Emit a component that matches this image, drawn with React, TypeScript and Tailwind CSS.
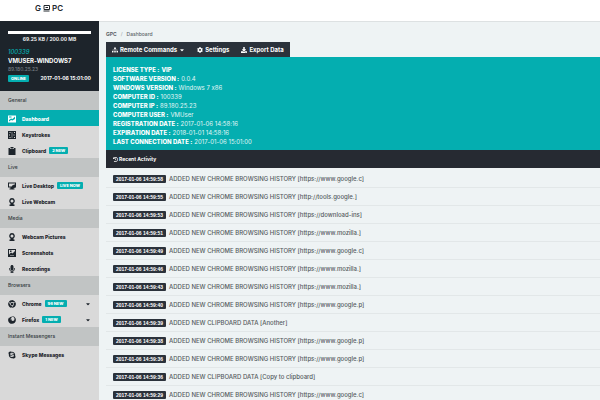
import type { ReactNode } from "react";
import {
  FaCaretDown,
  FaChrome,
  FaCog,
  FaDownload,
  FaFirefox,
  FaHistory,
  FaMicrophone,
  FaSitemap,
  FaSkype,
} from "react-icons/fa";

interface NavItem {
  label: string;
  icon: ReactNode;
  badge?: string;
  active?: boolean;
  expandable?: boolean;
}

interface NavSection {
  title: string;
  items: NavItem[];
}

function ChartIcon() {
  return (
    <svg viewBox="0 0 16 16" className="size-2" fill="currentColor">
      <path fillRule="evenodd" d="M0 1h16v14H0zM2 10l4-3 3 1 5-5v5L9 11 6 10l-4 3zM2 3h5v2H2z" />
    </svg>
  );
}

function KeysIcon() {
  return (
    <svg viewBox="0 0 16 16" className="size-2" fill="currentColor">
      <path
        fillRule="evenodd"
        d="M0 0h16v16H0zM3 2v2h2V2zM7 3v2h2V3zM12 2v2h2V2zM2 7v2h2V7zM7 7v2h2V7zM11 7v2h2V7zM3 12v2h2v-2zM7 11v2h2v-2zM12 12v2h2v-2z"
      />
    </svg>
  );
}

function ClipboardIcon() {
  return (
    <svg viewBox="0 0 16 16" className="size-2" fill="currentColor">
      <path d="M1 2h3v2h8V2h3v14H1zM5 0h6v3H5z" />
    </svg>
  );
}

function DesktopIcon() {
  return (
    <svg viewBox="0 0 16 16" className="size-2" fill="currentColor">
      <path fillRule="evenodd" d="M0 1h16v10h-5v2h2v2H3v-2h2v-2H0zM2 3v6h5l5-4h2V3z" />
      <path d="M9 6l6 5-4 1-2 3z" />
    </svg>
  );
}

function WebcamIcon() {
  return (
    <svg viewBox="0 0 16 16" className="size-2" fill="currentColor">
      <path
        fillRule="evenodd"
        d="M8 0a6 6 0 0 1 3 11v2h2v3H3v-3h2v-2A6 6 0 0 1 8 0zM8 3a3 3 0 1 0 0 6a3 3 0 0 0 0-6z"
      />
    </svg>
  );
}

function ScreenshotIcon() {
  return (
    <svg viewBox="0 0 16 16" className="size-2" fill="currentColor">
      <path fillRule="evenodd" d="M0 0h16v16H0zM2 2v9l4-4 3 2 5-5V2zM4 13h8v-1H4z" />
      <path d="M4 3h3v3H4z" />
    </svg>
  );
}

const sections: NavSection[] = [
  {
    title: "General",
    items: [
      { label: "Dashboard", icon: <ChartIcon />, active: true },
      { label: "Keystrokes", icon: <KeysIcon /> },
      { label: "Clipboard", icon: <ClipboardIcon />, badge: "2 NEW" },
    ],
  },
  {
    title: "Live",
    items: [
      { label: "Live Desktop", icon: <DesktopIcon />, badge: "LIVE NOW" },
      { label: "Live Webcam", icon: <WebcamIcon /> },
    ],
  },
  {
    title: "Media",
    items: [
      { label: "Webcam Pictures", icon: <WebcamIcon /> },
      { label: "Screenshots", icon: <ScreenshotIcon /> },
      { label: "Recordings", icon: <FaMicrophone /> },
    ],
  },
  {
    title: "Browsers",
    items: [
      { label: "Chrome", icon: <FaChrome />, badge: "96 NEW", expandable: true },
      { label: "Firefox", icon: <FaFirefox />, badge: "1 NEW", expandable: true },
    ],
  },
  {
    title: "Instant Messengers",
    items: [{ label: "Skype Messages", icon: <FaSkype /> }],
  },
];

const details = [
  { label: "LICENSE TYPE", value: "VIP", strong: true },
  { label: "SOFTWARE VERSION", value: "0.0.4" },
  { label: "WINDOWS VERSION", value: "Windows 7 x86" },
  { label: "COMPUTER ID", value: "100339" },
  { label: "COMPUTER IP", value: "89.180.25.23" },
  { label: "COMPUTER USER", value: "VMUser" },
  { label: "REGISTRATION DATE", value: "2017-01-06 14:58:16" },
  { label: "EXPIRATION DATE", value: "2018-01-01 14:58:16" },
  { label: "LAST CONNECTION DATE", value: "2017-01-06 15:01:00" },
];

const activity = [
  { time: "2017-01-06 14:59:58", text: "ADDED NEW CHROME BROWSING HISTORY [https://www.google.c]" },
  { time: "2017-01-06 14:59:55", text: "ADDED NEW CHROME BROWSING HISTORY [http://tools.google.]" },
  { time: "2017-01-06 14:59:53", text: "ADDED NEW CHROME BROWSING HISTORY [https://download-ins]" },
  { time: "2017-01-06 14:59:51", text: "ADDED NEW CHROME BROWSING HISTORY [https://www.mozilla.]" },
  { time: "2017-01-06 14:59:49", text: "ADDED NEW CHROME BROWSING HISTORY [https://www.google.c]" },
  { time: "2017-01-06 14:59:46", text: "ADDED NEW CHROME BROWSING HISTORY [https://www.mozilla.]" },
  { time: "2017-01-06 14:59:43", text: "ADDED NEW CHROME BROWSING HISTORY [https://www.mozilla.]" },
  { time: "2017-01-06 14:59:40", text: "ADDED NEW CHROME BROWSING HISTORY [https://www.google.p]" },
  { time: "2017-01-06 14:59:39", text: "ADDED NEW CLIPBOARD DATA [Another]" },
  { time: "2017-01-06 14:59:38", text: "ADDED NEW CHROME BROWSING HISTORY [https://www.google.p]" },
  { time: "2017-01-06 14:59:36", text: "ADDED NEW CHROME BROWSING HISTORY [https://www.google.p]" },
  { time: "2017-01-06 14:59:36", text: "ADDED NEW CLIPBOARD DATA [Copy to clipboard]" },
  { time: "2017-01-06 14:59:29", text: "ADDED NEW CHROME BROWSING HISTORY [https://www.google.c]" },
];

function Sidebar() {
  return (
    <aside className="w-[99px] shrink-0 bg-[#d9d9d9]">
      <div className="h-[70px] bg-[#1d242b] px-2 pt-2.5 text-white">
        <div className="h-[3px] bg-white" />
        <p className="pt-px text-center text-[5px] leading-[9px] font-semibold">69.25 KB / 200.00 MB</p>
        <a href="#computer" className="mt-1 block text-[6px] leading-2 font-medium text-[#04aeb0] italic">
          100339
        </a>
        <p className="text-[6px] leading-[9px] font-bold">VMUSER-WINDOWS7</p>
        <p className="text-[5px] leading-2 text-[#7d858c]">89.180.25.23</p>
        <div className="flex items-center justify-between pt-px whitespace-nowrap">
          <span className="rounded-[1px] bg-[#04aeb0] px-[3px] text-[4px] leading-[7px] font-extrabold">ONLINE</span>
          <span className="text-[5px] leading-2 font-bold">2017-01-06 15:01:00</span>
        </div>
      </div>

      <nav>
        {sections.map((section) => (
          <div key={section.title}>
            <h2 className="bg-[#c1c4c4] px-2 text-[5px] leading-[19px] font-medium text-[#333a40]">
              {section.title}
            </h2>
            {section.items.map((item) => (
              <a
                key={item.label}
                href="#nav"
                className={`flex h-4 items-center px-2 pt-px text-[5px] leading-2 font-extrabold ${
                  item.active ? "bg-[#04aeb0] text-white" : "text-[#1d242b]"
                }`}
              >
                <span className="mr-1.5 flex w-2 justify-center text-[8px]">{item.icon}</span>
                {item.label}
                {item.badge && (
                  <span className="ml-[3px] rounded-[1px] bg-[#04aeb0] px-[3px] text-[4px] leading-[7px] text-white">
                    {item.badge}
                  </span>
                )}
                {item.expandable && <FaCaretDown className="ml-auto text-[6px]" />}
              </a>
            ))}
          </div>
        ))}
      </nav>
    </aside>
  );
}

export default function App() {
  return (
    <div className="flex h-screen flex-col overflow-hidden bg-[#eef3f4] font-[Inter,'Liberation_Sans',sans-serif] [font-feature-settings:'calt'_0]">
      <header className="flex h-[21px] shrink-0 items-start bg-white pt-1 pl-[35px]">
        <h1 className="flex items-center gap-0.5 text-[8px] leading-2 font-semibold text-[#22282e]">
          G
          <svg viewBox="0 0 14 14" className="size-[7px]" fill="none" stroke="currentColor" strokeWidth="2">
            <path d="M2 1h11v8H2zM1 12h12M5 5h5" />
          </svg>
          PC
        </h1>
      </header>

      <div className="flex min-h-0 flex-1">
        <Sidebar />

        <main className="min-w-0 flex-1 border-t border-[#dde1e2] pl-[7px]">
          <div className="flex h-5 items-end gap-1 pb-1 text-[5px] leading-2 font-medium text-[#5c6368]">
            <a href="#gpc" className="font-bold">
              GPC
            </a>
            <span className="text-[#a5abae]">/</span>
            <span>Dashboard</span>
          </div>

          <div className="flex">
            <div className="flex h-[15px] items-center gap-3 bg-[#2b323b] px-1.5 text-[6px] font-bold text-white">
              <button type="button" className="flex items-center gap-0.5">
                <FaSitemap />
                Remote Commands
                <FaCaretDown />
              </button>
              <button type="button" className="flex items-center gap-0.5">
                <FaCog />
                Settings
              </button>
              <button type="button" className="flex items-center gap-0.5">
                <FaDownload />
                Export Data
              </button>
            </div>
          </div>

          <dl className="bg-[#04aeb0] px-[7px] pt-2 pb-1 text-[6px] leading-[9px] text-white">
            {details.map((detail) => (
              <div key={detail.label} className="flex gap-0.5">
                <dt className="font-extrabold">{detail.label} :</dt>
                <dd className={detail.strong ? "font-extrabold" : "text-[#e2f6f6]"}>{detail.value}</dd>
              </div>
            ))}
          </dl>

          <h2 className="flex h-[18px] items-center gap-px bg-[#262a32] px-[7px] text-[5px] leading-2 font-bold text-white">
            <FaHistory />
            Recent Activity
          </h2>

          <ul className="pt-0.5">
            {activity.map((entry, i) => (
              <li key={i} className="flex h-[18px] items-center gap-[3px] border-b border-[#e2e7e8] px-[7px]">
                <time className="rounded-[1px] bg-[#2b323b] px-[3px] font-['Liberation_Sans',Arial,sans-serif] text-[5px] leading-2 font-bold text-white">
                  {entry.time}
                </time>
                <span className="text-[6px] leading-2 font-medium text-[#555b60]">{entry.text}</span>
              </li>
            ))}
          </ul>
        </main>
      </div>
    </div>
  );
}
